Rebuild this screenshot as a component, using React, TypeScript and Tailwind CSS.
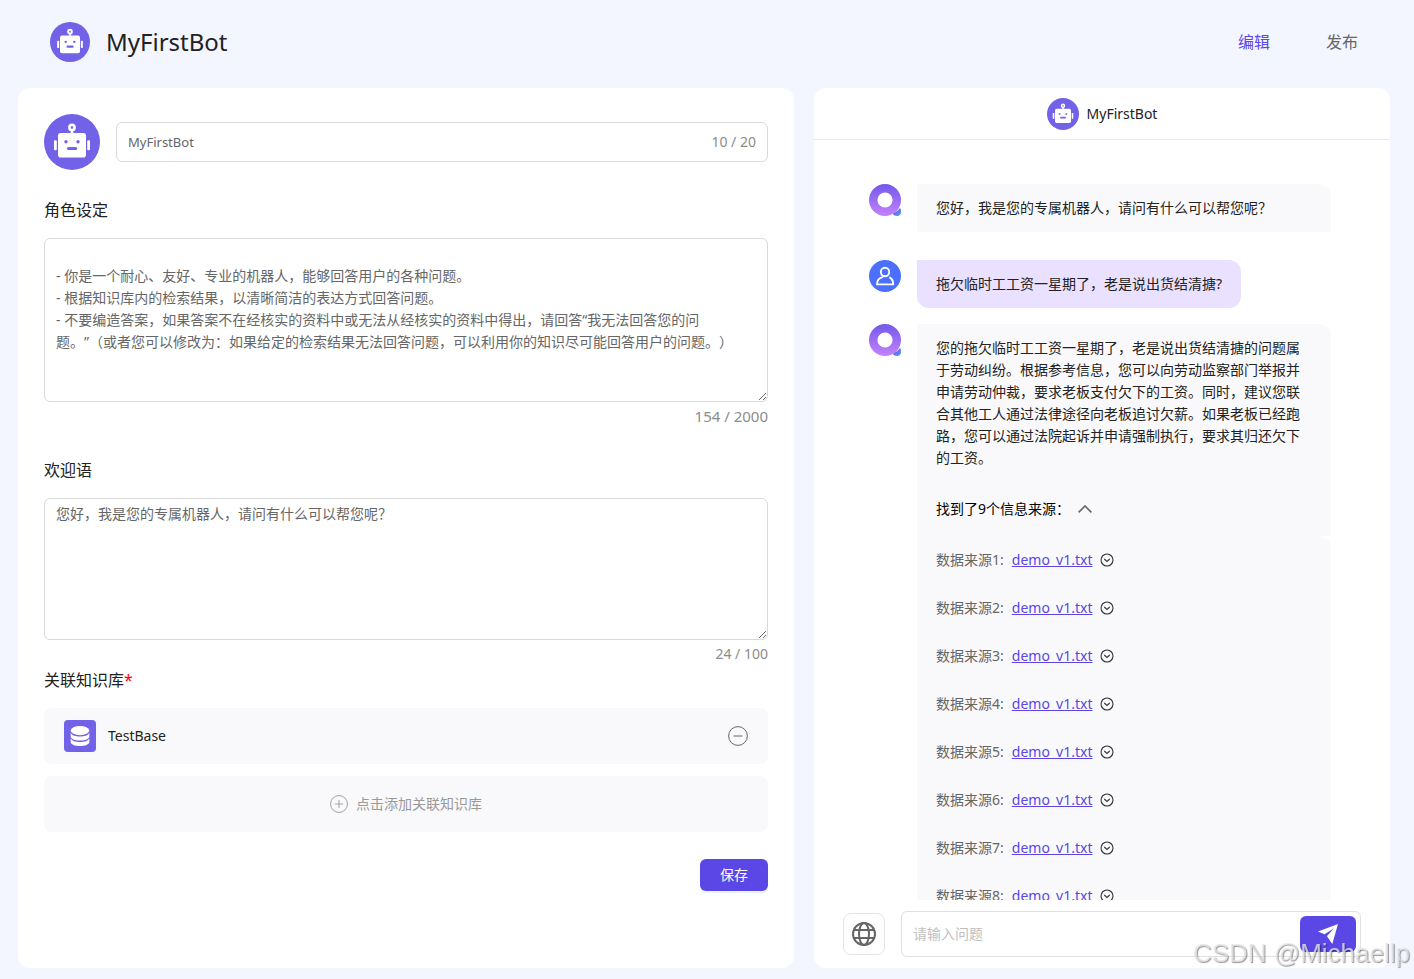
import React, { useState } from 'react';

interface Source {
  id: number;
  file: string;
}

const BOT_NAME = 'MyFirstBot';

const DEFAULT_ROLE = `
- 你是一个耐心、友好、专业的机器人，能够回答用户的各种问题。
- 根据知识库内的检索结果，以清晰简洁的表达方式回答问题。
- 不要编造答案，如果答案不在经核实的资料中或无法从经核实的资料中得出，请回答“我无法回答您的问题。”（或者您可以修改为：如果给定的检索结果无法回答问题，可以利用你的知识尽可能回答用户的问题。）
`;

const WELCOME = '您好，我是您的专属机器人，请问有什么可以帮您呢？';

const ANSWER =
  '您的拖欠临时工工资一星期了，老是说出货结清搪的问题属于劳动纠纷。根据参考信息，您可以向劳动监察部门举报并申请劳动仲裁，要求老板支付欠下的工资。同时，建议您联合其他工人通过法律途径向老板追讨欠薪。如果老板已经跑路，您可以通过法院起诉并申请强制执行，要求其归还欠下的工资。';

const sources: Source[] = Array.from({ length: 9 }, (_, i) => ({ id: i + 1, file: 'demo_v1.txt' }));

const RobotAvatar = ({ className }: { className: string }) => (
  <svg viewBox="0 0 56 56" className={className} aria-hidden="true">
    <circle cx="28" cy="28" r="28" fill="#7262e8" />
    <circle cx="28" cy="13.5" r="2.6" fill="none" stroke="#fff" strokeWidth="2.6" />
    <path d="M28 16v4" stroke="#fff" strokeWidth="2.4" />
    <rect x="14" y="19" width="28" height="24.6" rx="2.8" fill="#fff" />
    <rect x="10" y="26.3" width="2.8" height="10" rx="1" fill="#fff" />
    <rect x="43.2" y="26.3" width="2.8" height="10" rx="1" fill="#fff" />
    <circle cx="22" cy="27.8" r="1.7" fill="#7262e8" />
    <circle cx="34" cy="27.8" r="1.7" fill="#7262e8" />
    <rect x="23" y="33" width="10.2" height="3" rx="1.5" fill="#7262e8" />
  </svg>
);

const AssistantAvatar = () => (
  <svg viewBox="0 0 32 32" className="h-8 w-8 shrink-0" aria-hidden="true">
    <defs>
      <linearGradient id="ring" x1="0" y1="0" x2="0" y2="1">
        <stop offset="0" stopColor="#7159ec" />
        <stop offset="1" stopColor="#c581fb" />
      </linearGradient>
      <linearGradient id="drop" x1="0" y1="0" x2="1" y2="1">
        <stop offset="0" stopColor="#5a4be0" />
        <stop offset="1" stopColor="#5b9cff" />
      </linearGradient>
    </defs>
    <circle cx="16" cy="16" r="16" fill="url(#ring)" />
    <circle cx="16" cy="16" r="7.6" fill="#fff" />
    <path d="M23.8 29.8C26.6 28.6 29.6 26 31.2 23.8c.6 1.200.8 2.600.8 4.200 0 2.400-1.600 4-4 4-1.800 0-3.400-.8-4.200-2.200z" fill="url(#drop)" />
  </svg>
);

const UserAvatar = () => (
  <svg viewBox="0 0 32 32" className="h-8 w-8 shrink-0" fill="none" aria-hidden="true">
    <circle cx="16" cy="16" r="16" fill="#4b70ff" />
    <circle cx="16" cy="12" r="4.2" stroke="#fff" strokeWidth="1.9" />
    <path d="M13.2 17.2C9.8 18.200 8 21.200 8 24.400h16.200c0-2.800-1-5.400-3.200-6.800" stroke="#fff" strokeWidth="1.9" strokeLinecap="round" strokeLinejoin="round" />
  </svg>
);

const DatabaseIcon = () => (
  <svg viewBox="0 0 32 32" className="h-8 w-8 shrink-0" aria-hidden="true">
    <rect width="32" height="32" rx="4" fill="#7262e8" />
    <ellipse cx="16" cy="10.6" rx="9.3" ry="4.6" fill="#fff" />
    <path d="M6.700 13c1.300 2.300 5 3.600 9.300 3.600s8-1.300 9.300-3.600v3.400c0 2.300-4.200 4.200-9.300 4.200s-9.300-1.900-9.300-4.200z" fill="#fff" />
    <path d="M6.700 18.500c1.300 2.300 5 3.600 9.300 3.600s8-1.300 9.300-3.600v3.400c0 2.300-4.200 4.200-9.300 4.200s-9.300-1.900-9.300-4.200z" fill="#fff" />
  </svg>
);

const GlobeIcon = () => (
  <svg viewBox="0 0 24 24" className="h-6 w-6" fill="none" stroke="#666" strokeWidth="2" aria-hidden="true">
    <circle cx="12" cy="12" r="11" />
    <ellipse cx="12" cy="12" rx="5" ry="11" />
    <path d="M2 8h20M2 16h20" />
  </svg>
);

const SendIcon = () => (
  <svg viewBox="0 0 20 20" className="h-5 w-5" fill="#fff" aria-hidden="true">
    <path d="M20 0 0 7.5l6.600 2.700L16 4.200 9 12v.2L14.300 20z" />
  </svg>
);

const CircleIcon = ({ plus = false }: { plus?: boolean }) => (
  <svg viewBox="0 0 20 20" className={plus ? 'h-[18px] w-[18px]' : 'h-5 w-5'} fill="none" stroke="currentColor" aria-hidden="true">
    <circle cx="10" cy="10" r="9.4" />
    <path d={plus ? 'M5.500 10h9M10 5.500v9' : 'M5.500 10h9'} />
  </svg>
);

export default function App() {
  const [name, setName] = useState(BOT_NAME);
  const [role, setRole] = useState(DEFAULT_ROLE);
  const [welcome, setWelcome] = useState(WELCOME);
  const [open, setOpen] = useState(true);

  return (
    <div className="flex h-screen flex-col bg-[#f3f6ff] pr-6 pb-[11px] pl-[18px] font-['Noto_Sans','Noto_Sans_CJK_SC',sans-serif] text-sm text-[#222] [text-spacing-trim:space-all]">
      <header className="flex h-[88px] shrink-0 items-center justify-between px-8 pb-1">
        <div className="flex items-center gap-4">
          <RobotAvatar className="h-10 w-10" />
          <h1 className="text-2xl">{BOT_NAME}</h1>
        </div>
        <nav className="flex gap-14 text-base">
          <a href="#edit" className="text-[#5b47e5]">编辑</a>
          <a href="#publish" className="text-[#666]">发布</a>
        </nav>
      </header>

      <main className="grid min-h-0 flex-1 grid-cols-[97fr_72fr] gap-5">
        {/* Bot settings */}
        <form className="flex flex-col overflow-hidden rounded-xl bg-white p-[26px]">
          <div className="flex items-center gap-4">
            <RobotAvatar className="h-14 w-14 shrink-0" />
            <div className="flex h-10 flex-1 items-center rounded-md border border-[#d9d9d9] px-[11px] text-[#666]">
              <input aria-label="名称" value={name} onChange={(e) => setName(e.target.value)} maxLength={20} className="min-w-0 flex-1 text-[13px] outline-none" />
              <span className="text-[#8c8c8c]">10 / 20</span>
            </div>
          </div>

          <label htmlFor="role" className="mt-7 text-base">角色设定</label>
          <textarea
            id="role"
            rows={7}
            value={role}
            onChange={(e) => setRole(e.target.value)}
            className="mt-4 block w-full resize-y overflow-hidden rounded-md border border-[#d9d9d9] px-[11px] py-1 leading-[22px] text-[#666] outline-none"
          />
          <p className="mt-0.5 text-right text-[15px] leading-6 text-[#8c8c8c]">154 / 2000</p>

          <label htmlFor="welcome" className="mt-[30px] text-base">欢迎语</label>
          <textarea
            id="welcome"
            rows={6}
            value={welcome}
            onChange={(e) => setWelcome(e.target.value)}
            className="mt-4 block w-full resize-y overflow-hidden rounded-md border border-[#d9d9d9] px-[11px] py-1 leading-[22px] text-[#666] outline-none"
          />
          <p className="mt-0.5 text-right leading-6 text-[#8c8c8c]">24 / 100</p>

          <h2 className="mt-0.5 text-base">关联知识库<span className="text-[#f00]">*</span></h2>
          <div className="mt-4 flex h-14 shrink-0 items-center gap-3 rounded-lg bg-[#f9f9fb] px-5">
            <DatabaseIcon />
            <span className="flex-1">TestBase</span>
            <button type="button" aria-label="移除" className="text-[#666]">
              <CircleIcon />
            </button>
          </div>
          <button type="button" className="mt-3 flex h-14 shrink-0 items-center justify-center gap-2 rounded-lg bg-[#f9f9fb] text-[#999]">
            <CircleIcon plus />
            点击添加关联知识库
          </button>

          <button type="button" className="mt-[27px] h-8 shrink-0 self-end rounded-md bg-[#5b47e5] px-5 text-white shadow-[0_2px_0_rgba(5,145,255,0.1)]">
            保存
          </button>
        </form>

        {/* Chat preview */}
        <section className="flex min-h-0 flex-col rounded-xl bg-white">
          <div className="flex h-[52px] shrink-0 items-center justify-center gap-2 border-b border-[#ebebeb]">
            <RobotAvatar className="h-8 w-8" />
            <span>{BOT_NAME}</span>
          </div>

          <div className="min-h-0 flex-1 overflow-y-auto pt-11 pr-[59px] pl-[55px] leading-[22px] [scrollbar-width:none]">
            <div className="flex gap-4">
              <AssistantAvatar />
              <p className="flex-1 rounded-tr-xl bg-[#f9f9fb] px-[19px] py-[13px]">{WELCOME}</p>
            </div>

            <div className="mt-7 flex gap-4">
              <UserAvatar />
              <p className="rounded-xl rounded-tl-none bg-[#e9e1ff] px-[19px] py-[13px]">拖欠临时工工资一星期了，老是说出货结清搪?</p>
            </div>

            <div className="mt-4 flex gap-4">
              <AssistantAvatar />
              <div className="min-w-0 flex-1">
                <div className="rounded-tr-xl bg-[#f9f9fb] px-[19px] pt-[13px]">
                  <p>{ANSWER}</p>
                  <button type="button" onClick={() => setOpen(!open)} className="mt-[13px] flex h-[54px] items-center gap-2 text-black">
                    找到了{sources.length}个信息来源：
                    <svg viewBox="0 0 14 8" className="h-2 w-3.5" fill="none" stroke="#666" strokeWidth="1.6" aria-hidden="true">
                      <path d="M.6 7.400 7 1l6.400 6.400" />
                    </svg>
                  </button>
                </div>
                {open && (
                  <ul className="rounded-tr-xl bg-[#f9f9fb] px-[19px]">
                    {sources.map((source) => (
                      <li key={source.id} className="flex h-12 items-center gap-2 text-[#666]">
                        <span>数据来源{source.id}:</span>
                        <a href="#source" className="text-[#5b47e5] underline [text-decoration-skip-ink:none]">{source.file}</a>
                        <svg viewBox="0 0 14 14" className="h-3.5 w-3.5" fill="none" stroke="#333" strokeWidth="1.1" aria-hidden="true">
                          <circle cx="7" cy="7" r="6" />
                          <path d="M4.300 6 7 8.500 9.700 6" />
                        </svg>
                      </li>
                    ))}
                  </ul>
                )}
              </div>
            </div>
          </div>

          <div className="flex shrink-0 items-center gap-4 px-[29px] py-[11px]">
            <button type="button" aria-label="语言" className="flex h-[42px] w-[42px] items-center justify-center rounded-lg border border-[#e5e5e5]">
              <GlobeIcon />
            </button>
            <div className="flex h-[46px] flex-1 items-center rounded-md border border-[#e0e0e0] pr-1 pl-[11px]">
              <input aria-label="请输入问题" placeholder="请输入问题" className="min-w-0 flex-1 outline-none placeholder:text-[#bfbfbf]" />
              <button type="button" aria-label="发送" className="flex h-9 w-14 items-center justify-center rounded-md bg-[#5b47e5]">
                <SendIcon />
              </button>
            </div>
          </div>
        </section>
      </main>

      <span className="pointer-events-none fixed right-1 bottom-2 font-['Liberation_Sans',sans-serif] text-[26px] leading-9 text-[#e6e6e6]/80 [text-shadow:1px_1px_1px_rgba(0,0,0,0.4)]">
        CSDN @Michaellp
      </span>
    </div>
  );
}
